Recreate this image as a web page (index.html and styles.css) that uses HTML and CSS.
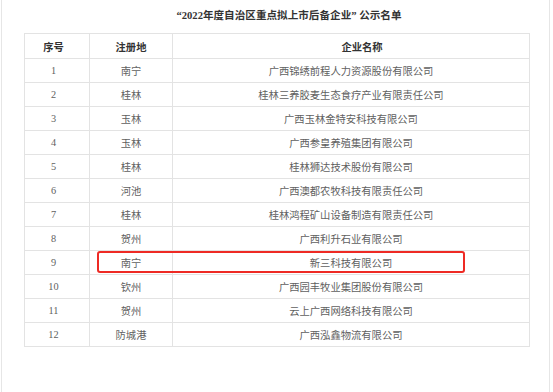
FILE: index.html
```html
<!DOCTYPE html>
<html lang="zh-CN">
<head>
<meta charset="utf-8">
<title>公示名单</title>
<link rel="stylesheet" href="styles.css">
</head>
<body>
<div class="panel">
  <h1 class="title">“2022年度自治区重点拟上市后备企业” 公示名单</h1>
  <div class="table-wrap">
    <table class="list">
      <colgroup>
        <col class="c-no">
        <col class="c-place">
        <col class="c-name">
      </colgroup>
      <thead>
        <tr><th class="no">序号</th><th>注册地</th><th class="name">企业名称</th></tr>
      </thead>
      <tbody>
        <tr><td class="no">1</td><td>南宁</td><td>广西锦绣前程人力资源股份有限公司</td></tr>
        <tr><td class="no">2</td><td>桂林</td><td>桂林三养胶麦生态食疗产业有限责任公司</td></tr>
        <tr><td class="no">3</td><td>玉林</td><td>广西玉林金特安科技有限公司</td></tr>
        <tr><td class="no">4</td><td>玉林</td><td>广西参皇养殖集团有限公司</td></tr>
        <tr><td class="no">5</td><td>桂林</td><td>桂林狮达技术股份有限公司</td></tr>
        <tr><td class="no">6</td><td>河池</td><td>广西澳都农牧科技有限责任公司</td></tr>
        <tr><td class="no">7</td><td>桂林</td><td>桂林鸿程矿山设备制造有限责任公司</td></tr>
        <tr><td class="no">8</td><td>贺州</td><td>广西利升石业有限公司</td></tr>
        <tr><td class="no">9</td><td>南宁</td><td>新三科技有限公司</td></tr>
        <tr><td class="no">10</td><td>钦州</td><td>广西园丰牧业集团股份有限公司</td></tr>
        <tr><td class="no">11</td><td>贺州</td><td>云上广西网络科技有限公司</td></tr>
        <tr><td class="no">12</td><td>防城港</td><td>广西泓鑫物流有限公司</td></tr>
      </tbody>
    </table>
    <div class="highlight"></div>
  </div>
</div>
</body>
</html>
```

FILE: styles.css
```css
html, body {
  margin: 0;
  padding: 0;
  background: #ffffff;
}

body {
  font-family: "Liberation Serif", "Noto Sans CJK SC", serif;
  color: #5f5f5f;
}

.panel {
  margin-left: 1px;
  width: 549px;
  height: 392px;
  border-left: 1px solid #e6e6e6;
  border-right: 1px solid #e6e6e6;
  padding-left: 22px;
  box-sizing: border-box;
}

.title {
  margin: 0;
  padding: 8px 0 0 25px;
  height: 33px;
  box-sizing: border-box;
  text-align: center;
  font-size: 10.6px;
  line-height: 16px;
  font-weight: bold;
  color: #333333;
  width: 505px;
}

.table-wrap {
  position: relative;
  width: 505px;
}

.list {
  border-collapse: collapse;
  width: 505px;
  table-layout: fixed;
  font-size: 10.3px;
}

.c-no { width: 65px; }
.c-place { width: 83px; }
.c-name { width: 357px; }

.list th,
.list td {
  border: 1px solid #e3e3e3;
  text-align: center;
  padding: 0;
  white-space: nowrap;
}

.list th {
  height: 24px;
  font-weight: bold;
  color: #333333;
  font-size: 10.3px;
}

.list td {
  height: 23px;
}

.list .no {
  padding-right: 7px;
}

.list th.name {
  padding-left: 22px;
}

.highlight {
  position: absolute;
  left: 73px;
  top: 218px;
  width: 368px;
  height: 22px;
  border: 2px solid #ee2a24;
  border-radius: 3px;
  box-sizing: border-box;
}
```
